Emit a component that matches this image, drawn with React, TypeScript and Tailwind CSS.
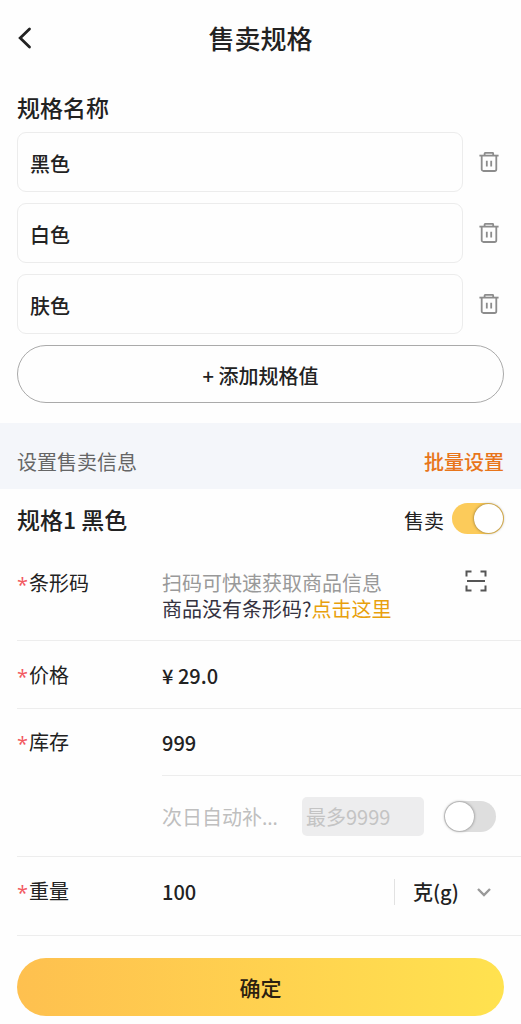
import React, { useState } from "react";

function TrashIcon() {
  return (
    <svg viewBox="0 0 20 20" className="w-5 h-5" fill="none" stroke="#8c8c8c" strokeWidth="1.8">
      <path d="M0.4 3.6H19.6" />
      <path d="M5.6 3.4V1.7a0.9 0.9 0 0 1 0.9-0.9h6.8a0.9 0.9 0 0 1 0.9 0.9V3.4" />
      <path d="M2.7 4V17.2a1.8 1.8 0 0 0 1.8 1.8H15.5a1.8 1.8 0 0 0 1.8-1.8V4" />
      <path d="M7.8 8.8V14.4M12.2 8.8V14.4" />
    </svg>
  );
}

function ScanIcon() {
  return (
    <svg viewBox="0 0 22 22" className="w-[22px] h-[22px]" fill="none" stroke="#555" strokeWidth="2">
      <path d="M1.5 6.5V1.5H6.5M15.5 1.5H20.5V6.5M20.5 15.5V20.5H15.5M6.5 20.5H1.5V15.5" />
      <path d="M2 11H20" />
    </svg>
  );
}

function Toggle({ id, label, defaultChecked }: { id: string; label?: string; defaultChecked?: boolean }) {
  return (
    <input
      id={id}
      type="checkbox"
      role="switch"
      aria-label={label}
      defaultChecked={defaultChecked}
      className="appearance-none flex shrink-0 items-center w-[52px] h-[31px] p-px rounded-full bg-[#dedede] checked:bg-[#fccb5a] checked:justify-end before:block before:w-[29px] before:h-[29px] before:rounded-full before:bg-white before:shadow-[0_0_3px_rgba(0,0,0,0.5)]"
    />
  );
}

function FieldLabel({ htmlFor, children }: { htmlFor: string; children: React.ReactNode }) {
  return (
    <label htmlFor={htmlFor} className="flex w-[145px] shrink-0 gap-0.5 leading-[26px]">
      <span className="w-2.5 pt-0.5 font-medium font-['Open_Sans',sans-serif] text-[#f2585f]">*</span>
      {children}
    </label>
  );
}

export default function App() {
  const [specs, setSpecs] = useState(["黑色", "白色", "肤色"]);

  return (
    <div className="bg-[#fefefe] text-[#222] text-[20px] leading-[26px] font-['Noto_Sans_CJK_SC',sans-serif] pb-2">
      <header className="grid grid-cols-[32px_1fr_32px] items-center h-[76px] px-[17px]">
        <button type="button" aria-label="返回">
          <svg viewBox="0 0 16 22" className="w-4 h-[22px]" fill="none" stroke="#222" strokeWidth="2.8" strokeLinecap="round">
            <path d="M12.5 2L3.2 11L12.5 20" />
          </svg>
        </button>
        <h1 className="text-center text-[26px] leading-[38px] font-medium">售卖规格</h1>
      </header>

      <section className="px-[17px] pt-3.5 pb-5">
        <h2 className="text-[23px] leading-[34px] font-medium">规格名称</h2>
        <div className="flex flex-col gap-[11px] pt-2">
          {specs.map((spec, i) => (
            <div key={i} className="flex items-center gap-4 pr-[5px]">
              <input
                aria-label={`规格值${i + 1}`}
                value={spec}
                onChange={(e) => setSpecs(specs.map((s, j) => (j === i ? e.target.value : s)))}
                className="flex-1 min-w-0 h-[60px] px-3 pt-0.5 rounded-[9px] border border-[#ececec] font-medium"
              />
              <button type="button" aria-label="删除" onClick={() => setSpecs(specs.filter((_, j) => j !== i))}>
                <TrashIcon />
              </button>
            </div>
          ))}
          <button
            type="button"
            onClick={() => setSpecs([...specs, ""])}
            className="h-[58px] pt-1 rounded-full border border-[#aaa] font-medium"
          >
            + 添加规格值
          </button>
        </div>
      </section>

      <div className="flex items-center justify-between h-[66px] px-[17px] pt-3 bg-[#f4f6fa]">
        <span className="text-[#666]">设置售卖信息</span>
        <button type="button" className="text-[#e8751a] font-medium">批量设置</button>
      </div>

      <section>
        <div className="flex items-center justify-between h-[59px] px-[17px]">
          <h2 className="text-[23px] leading-[34px] font-medium">规格1 黑色</h2>
          <div className="flex items-center gap-2">
            <label htmlFor="on-sale" className="pt-1">售卖</label>
            <Toggle id="on-sale" defaultChecked />
          </div>
        </div>

        <div className="flex ml-[17px] pt-[22px] h-[93px] border-b border-[#ededed]">
          <FieldLabel htmlFor="barcode">条形码</FieldLabel>
          <div className="flex-1 min-w-0">
            <input
              id="barcode"
              placeholder="扫码可快速获取商品信息"
              className="block w-full h-[26px] placeholder:text-[#999]"
            />
            <p className="text-[#35323f]">
              商品没有条形码?
              <a href="#barcode-help" className="text-[#e8a00c]">点击这里</a>
            </p>
          </div>
          <button type="button" aria-label="扫码" className="self-start mr-[34px]">
            <ScanIcon />
          </button>
        </div>

        <div className="flex items-center ml-[17px] h-[68px] pt-0.5 border-b border-[#ededed]">
          <FieldLabel htmlFor="price">价格</FieldLabel>
          <input id="price" defaultValue="¥ 29.0" className="flex-1 min-w-0 font-medium" />
        </div>

        <div className="ml-[17px] border-b border-[#ededed]">
          <div className="flex items-center h-[66px] pt-0.5">
            <FieldLabel htmlFor="stock">库存</FieldLabel>
            <input id="stock" defaultValue="999" className="flex-1 min-w-0 font-medium" />
          </div>
          <div className="flex items-center ml-[145px] h-[81px] pr-[25px] border-t border-[#ededed]">
            <label htmlFor="restock" className="flex-1 pt-1 whitespace-nowrap text-[#bfbfbf] font-['Noto_Sans','Noto_Sans_CJK_SC',sans-serif]">
              次日自动补…
            </label>
            <input
              aria-label="补货数量"
              placeholder="最多9999"
              disabled
              className="w-[122px] h-[39px] mr-5 px-1 rounded-[5px] bg-[#ededee] placeholder:text-[#c4c4c4]"
            />
            <Toggle id="restock" />
          </div>
        </div>

        <div className="flex items-center ml-[17px] h-[79px] pb-2 border-b border-[#ededed]">
          <FieldLabel htmlFor="weight">重量</FieldLabel>
          <input id="weight" defaultValue="100" className="flex-1 min-w-0 font-medium" />
          <div className="grid items-center h-[26px] w-[97px] mr-[30px] pl-[18px] border-l border-[#e2e2e2]">
            <select aria-label="重量单位" className="col-start-1 row-start-1 appearance-none font-medium">
              <option>克(g)</option>
              <option>千克(kg)</option>
            </select>
            <svg viewBox="0 0 14 10" className="col-start-1 row-start-1 justify-self-end w-3.5 h-2.5 pointer-events-none" fill="none" stroke="#999" strokeWidth="2.4">
              <path d="M1 2L7 8L13 2" />
            </svg>
          </div>
        </div>
      </section>

      <div className="px-[17px] pt-[22px]">
        <button
          type="submit"
          className="block w-full h-[58px] rounded-full bg-linear-to-r from-[#fec04f] to-[#ffe24f] text-[21px] font-medium text-[#2b2010]"
        >
          确定
        </button>
      </div>
    </div>
  );
}
